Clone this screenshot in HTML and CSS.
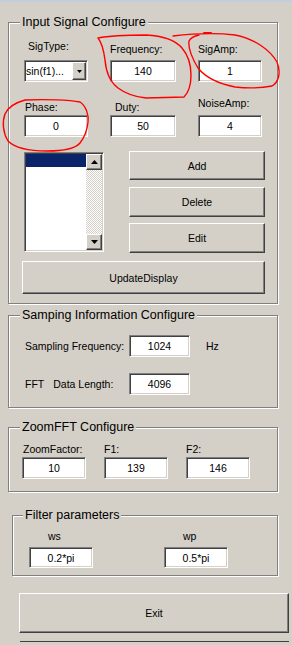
FILE: index.html
```html
<!DOCTYPE html>
<html>
<head>
<title>Signal Configure</title>
<meta charset="utf-8">
<link rel="stylesheet" href="styles.css">
</head>
<body>

<div class="strip"></div>

<!-- input signal -->
<fieldset class="panel p-input">
	<legend>Input Signal Configure</legend>

	<div class="fields row-a">
		<div class="field">
			<span class="lbl lbl-sig">SigType:</span>
			<div class="combo">
				<span class="combo-text">sin(f1)...</span>
				<span class="combo-btn"><svg width="5" height="3" viewBox="0 0 5 3"><polygon points="0,0 5,0 2.5,3" fill="#000"/></svg></span>
			</div>
		</div>
		<div class="field">
			<span class="lbl">Frequency:</span>
			<div class="edit">140</div>
		</div>
		<div class="field">
			<span class="lbl">SigAmp:</span>
			<div class="edit">1</div>
		</div>
	</div>

	<div class="fields row-b">
		<div class="field">
			<span class="lbl lbl-phase">Phase:</span>
			<div class="edit">0</div>
		</div>
		<div class="field">
			<span class="lbl lbl-duty">Duty:</span>
			<div class="edit">50</div>
		</div>
		<div class="field">
			<span class="lbl lbl-noise">NoiseAmp:</span>
			<div class="edit">4</div>
		</div>
	</div>

	<div class="list-row">
		<div class="listbox">
			<div class="list-items"><div class="list-sel"></div></div>
			<div class="vscroll">
				<div class="sbtn"><svg width="7" height="4" viewBox="0 0 7 4"><polygon points="3.5,0 7,4 0,4" fill="#000"/></svg></div>
				<div class="track"></div>
				<div class="sbtn"><svg width="7" height="4" viewBox="0 0 7 4"><polygon points="0,0 7,0 3.5,4" fill="#000"/></svg></div>
			</div>
		</div>
		<div class="btn-col">
			<button class="btn btn-add">Add</button>
			<button class="btn btn-del">Delete</button>
			<button class="btn btn-edit">Edit</button>
		</div>
	</div>

	<button class="btn btn-update">UpdateDisplay</button>
</fieldset>

<!-- sampling -->
<fieldset class="panel p-samp">
	<legend>Samping Information Configure</legend>
	<div class="srow">
		<span class="s-lbl">Sampling Frequency:</span>
		<div class="edit s-box">1024</div>
		<span class="hz">Hz</span>
	</div>
	<div class="srow">
		<span class="s-lbl"><span class="fft">FFT</span>Data Length:</span>
		<div class="edit s-box">4096</div>
	</div>
</fieldset>

<!-- zoom fft -->
<fieldset class="panel p-zoom">
	<legend>ZoomFFT Configure</legend>
	<div class="zfields">
		<div class="field">
			<span class="lbl lbl-zf">ZoomFactor:</span>
			<div class="edit">10</div>
		</div>
		<div class="field">
			<span class="lbl">F1:</span>
			<div class="edit">139</div>
		</div>
		<div class="field">
			<span class="lbl">F2:</span>
			<div class="edit">146</div>
		</div>
	</div>
</fieldset>

<!-- filter -->
<fieldset class="panel p-filter">
	<legend>Filter parameters</legend>
	<div class="ffields">
		<div class="field">
			<span class="lbl">ws</span>
			<div class="edit">0.2*pi</div>
		</div>
		<div class="field">
			<span class="lbl">wp</span>
			<div class="edit">0.5*pi</div>
		</div>
	</div>
</fieldset>

<button class="btn btn-exit">Exit</button>
<div class="sep"></div>

<!-- red pen marks drawn over the window -->
<svg class="marks" width="292" height="645" viewBox="0 0 292 645">
	<g fill="none" stroke="#f00" stroke-width="1.4" stroke-linecap="round">
		<path d="M98,38 C102,43 104,52 105,60 C106,72 110,82 118,88 C126,94 136,97 146,98 L184,97 C189,92 191,83 191,75 C191,65 188,55 182,48 C176,41 166,36 146,35 C125,35 108,36 98,38"/>
		<path d="M173,36 C190,34 210,32 235,35 C255,39 270,50 277,62 C281,72 279,82 272,86 C262,88 245,88 235,87 C220,84 206,78 198,68 C192,58 188,48 189,41 C191,37 194,36 199,35"/>
		<path d="M204,33 L211,33" stroke-width="2"/>
		<path d="M25,100 C45,99 70,100 80,102 C86,106 89,115 88,122 C87,132 84,138 80,143 C75,149 65,151 47,151 C30,151 15,148 8,141 C3,133 2,122 5,114 C8,107 14,103 25,100"/>
	</g>
</svg>

</body>
</html>
```

FILE: styles.css
```css
*{
	box-sizing: border-box;
}

body{
	margin: 0;
	width: 292px;
	height: 645px;
	position: relative;
	overflow: hidden;
	background: #d4d0c8;
	color: #000;
	font-family: "Liberation Sans", Arial, sans-serif;
	font-size: 10.5px;
}

.strip{
	height: 2px;
	background: #c2cedd;
}

/* group boxes */
.panel{
	margin: 0 0 0 8px;
	width: 270px;
	min-width: 0;
	padding: 0;
	border: 1px solid #808080;
	box-shadow: inset 1px 1px #fff, 1px 1px #fff;
}

.panel legend{
	padding: 0 2px;
	height: 14px;
	line-height: 14px;
	font-size: 12.5px;
	background: #d4d0c8;
}

.p-input{
	margin-top: 13px;
	padding: 14px 0 9px 15px;
}

.p-input legend{
	margin-left: -4px;
}

.p-samp{
	margin-top: 4px;
	padding: 13px 0 12px 16px;
}

.p-samp legend{
	margin-left: -5px;
}

.p-zoom{
	margin-top: 12px;
	padding: 9px 0 12px 13px;
}

.p-zoom legend{
	margin-left: -2px;
}

.p-filter{
	margin: 16px 0 0 12px;
	width: 266px;
	padding: 8px 0 7px 16px;
}

.p-filter legend{
	margin-left: -6px;
}

/* labels and edit boxes */
.fields{
	display: grid;
	grid-template-columns: 64px 66px 64px;
	column-gap: 22px;
}

.field{
	display: flex;
	flex-direction: column;
}

.lbl{
	height: 12px;
	line-height: 12px;
	white-space: nowrap;
}

.row-a .lbl{
	margin-bottom: 5px;
}

.row-a .lbl-sig{
	margin-top: -3px;
	margin-bottom: 8px;
	padding-left: 4px;
}

.row-b{
	margin-top: 19px;
}

.row-b .lbl{
	margin-bottom: 2px;
}

.row-b .lbl-phase{
	padding-left: 1px;
}

.row-b .lbl-duty{
	padding-left: 5px;
}

.row-b .lbl-noise{
	margin-top: -4px;
	margin-bottom: 6px;
}

.edit{
	height: 22px;
	padding-top: 1px;
	line-height: 19px;
	text-align: center;
	white-space: nowrap;
	background: #fff;
	border: 1px solid;
	border-color: #808080 #fff #fff #808080;
	box-shadow: inset 1px 1px #404040, inset -1px -1px #d4d0c8;
}

.combo{
	height: 22px;
	display: flex;
	align-items: center;
	padding-right: 1px;
	background: #fff;
	border: 1px solid;
	border-color: #808080 #fff #fff #808080;
	box-shadow: inset 1px 1px #404040, inset -1px -1px #d4d0c8;
}

.combo-text{
	flex: 1;
	padding-left: 1px;
	white-space: nowrap;
	overflow: hidden;
}

.combo-btn{
	width: 14px;
	height: 18px;
	display: flex;
	align-items: center;
	justify-content: center;
	background: #d4d0c8;
	border: 1px solid;
	border-color: #fff #404040 #404040 #fff;
	box-shadow: inset -1px -1px #808080;
}

/* list + buttons */
.list-row{
	display: flex;
	align-items: flex-start;
	margin-top: 14px;
}

.listbox{
	width: 80px;
	height: 100px;
	margin-top: 1px;
	padding: 1px;
	display: flex;
	background: #fff;
	border: 1px solid;
	border-color: #808080 #fff #fff #808080;
	box-shadow: inset 1px 1px #404040, inset -1px -1px #d4d0c8;
}

.list-items{
	flex: 1;
}

.list-sel{
	height: 13px;
	background: #0a246a;
}

.vscroll{
	width: 16px;
	display: flex;
	flex-direction: column;
}

.sbtn{
	height: 16px;
	display: flex;
	align-items: center;
	justify-content: center;
	background: #d4d0c8;
	border: 1px solid;
	border-color: #fff #404040 #404040 #fff;
	box-shadow: inset -1px -1px #808080;
}

.track{
	flex: 1;
	background: repeating-conic-gradient(#fff 0 25%, #d4d0c8 0 50%) 0 0 / 2px 2px;
}

.btn-col{
	width: 136px;
	margin-left: 25px;
	display: flex;
	flex-direction: column;
}

.btn{
	display: block;
	padding: 0;
	font: inherit;
	color: #000;
	background: #d4d0c8;
	border: 1px solid;
	border-color: #fff #404040 #404040 #fff;
	border-radius: 0;
	box-shadow: inset -1px -1px #808080;
}

.btn-add{
	height: 29px;
}

.btn-del{
	height: 30px;
	margin-top: 7px;
}

.btn-edit{
	height: 30px;
	margin-top: 6px;
}

.btn-update{
	width: 243px;
	height: 33px;
	margin: 8px 0 0 -2px;
}

/* sampling rows */
.srow{
	display: flex;
	align-items: center;
}

.srow + .srow{
	margin-top: 16px;
}

.s-lbl{
	width: 104px;
	line-height: 12px;
	white-space: nowrap;
}

.fft{
	margin-right: 9px;
}

.s-box{
	width: 61px;
}

.hz{
	margin-left: 16px;
	line-height: 12px;
}

/* zoom fft */
.zfields{
	display: grid;
	grid-template-columns: repeat(3, 64px);
	column-gap: 18px;
}

.zfields .lbl{
	margin-bottom: 2px;
}

.zfields .lbl-zf{
	padding-left: 1px;
}

/* filter */
.ffields{
	display: grid;
	grid-template-columns: 64px 64px;
	column-gap: 71px;
}

.ffields .lbl{
	padding-left: 19px;
	margin-bottom: 5px;
}

.ffields .edit{
	height: 21px;
}

.btn-exit{
	width: 270px;
	height: 40px;
	margin: 17px 0 0 19px;
}

.sep{
	width: 269px;
	height: 1px;
	margin: 8px 0 0 20px;
	background: #404040;
}

.marks{
	position: absolute;
	left: 0;
	top: 0;
	pointer-events: none;
}
```
